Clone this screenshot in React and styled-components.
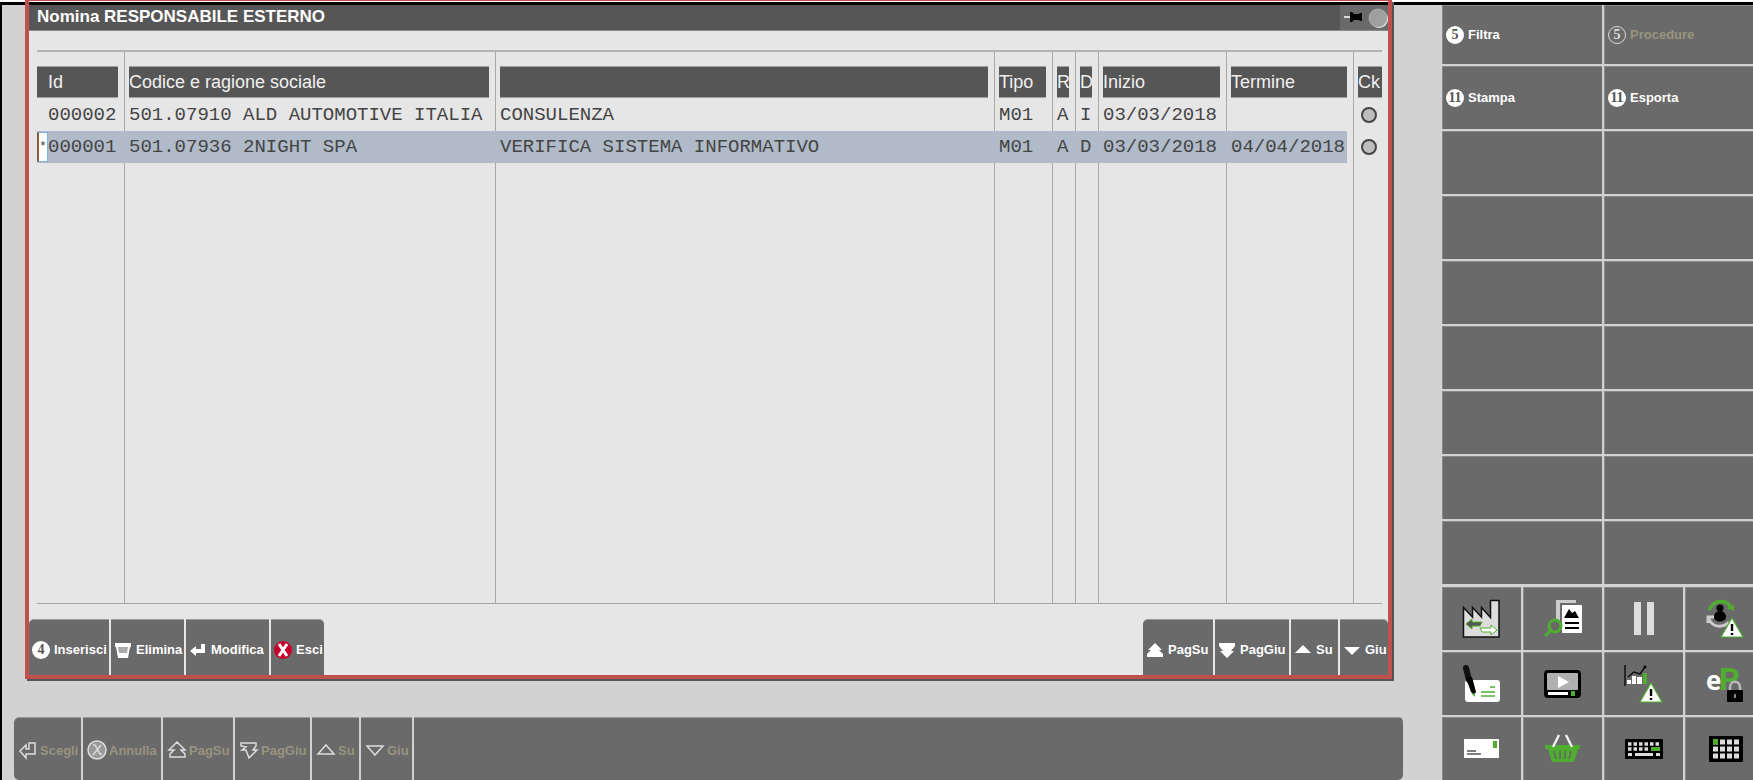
import React from 'react';
import styled, { createGlobalStyle } from 'styled-components';

const GlobalStyle = createGlobalStyle`
  * {
    box-sizing: border-box;
  }
  body {
    margin: 0;
    background: #fff;
    font-family: "Liberation Sans", Arial, sans-serif;
  }
  button {
    font: inherit;
    border: 0;
    padding: 0;
  }
`;

const Screen = styled.div`
  display: flex;
  min-height: 100vh;
  overflow: hidden;
  background: linear-gradient(#fff 2px, #000 2px, #000 5px, #d2d2d2 5px);
`;

const Main = styled.main`
  flex: 1;
  min-width: 0;
  display: flex;
  flex-direction: column;
  justify-content: space-between;
  padding-right: 39px;
  background: linear-gradient(#fff 2px, #000 2px) left / 2px 100% no-repeat;
`;

const Panel = styled.section`
  display: flex;
  flex-direction: column;
  height: calc(100vh - 101px);
  min-height: 420px;
  margin: 0 11px 0 25px;
  border: 4px solid #c0504d;
  border-top-width: 1px;
  box-shadow: 2px 2px 0 #555;
  background: linear-gradient(#fff 1px, #000 1px, #000 4px, #e6e6e6 4px);
`;

const TitleBar = styled.header`
  display: flex;
  justify-content: space-between;
  height: 26px;
  margin-top: 4px;
  background: #565656;
  border-bottom: 1px solid #8a8a8a;
`;

const Title = styled.h1`
  margin: 0;
  padding-left: 8px;
  font-size: 17px;
  line-height: 24px;
  color: #fff;
  white-space: nowrap;
`;

const TitleTools = styled.div`
  display: flex;
  align-items: center;
  width: 48px;
  background: #6a6a6a;
`;

const ToolButton = styled.button`
  display: flex;
  background: none;
`;

const TableArea = styled.div`
  flex: 1;
  display: flex;
  min-height: 0;
  margin: 19px 6px 15px 8px;
  border-top: 2px solid #b4b4b4;
  border-bottom: 1px solid #a6a6a6;
`;

const Table = styled.table`
  width: 100%;
  height: 100%;
  table-layout: fixed;
  border-collapse: separate;
  border-spacing: 0;
`;

const Cell = styled.td`
  height: 32px;
  padding: 0;
  font-family: "Liberation Mono", monospace;
  font-size: 19px;
  line-height: 32px;
  color: #444;
  white-space: pre;
`;

const Line = styled.td`
  padding: 0;
  background: linear-gradient(#a8a8a8, #a8a8a8) 6px 0 / 1px 100% no-repeat;
`;

const Row = styled.tr`
  ${Cell}:not(:last-child), ${Line}:not(:nth-last-child(2)) {
    ${(p) => p.$selected && 'background: #b0bac8;'}
  }
`;

const HeadCell = styled.th`
  height: 47px;
  padding: 14px 0 1px;
`;

const HeadLabel = styled.div`
  height: 32px;
  padding-left: ${(p) => (p.$indent ? 11 : 0)}px;
  background: #565656;
  border: solid #a0a0a0;
  border-width: 1px 0;
  font-size: 18px;
  font-weight: 400;
  line-height: 30px;
  text-align: left;
  color: #f0f0f0;
  white-space: nowrap;
`;

const IdCell = styled.div`
  display: flex;
  align-items: center;
`;

const Marker = styled.input`
  width: 11px;
  height: 30px;
  margin: 0;
  padding: 0;
  border: 1px solid #7ab4e4;
  border-left: 2px solid #8a5a3c;
  background: #fff;
  font: inherit;
  font-size: 13px;
  color: #444;
  outline: 0;
`;

const Spacer = styled.span`
  width: 11px;
`;

const Check = styled.input`
  appearance: none;
  display: block;
  width: 16px;
  height: 16px;
  margin: 0 3px;
  border: 2px solid #444;
  border-radius: 50%;
  background: #bebebe;
`;

const PanelFooter = styled.footer`
  display: flex;
  justify-content: space-between;
`;

const Group = styled.div`
  display: flex;
  gap: 2px;
`;

const ActionButton = styled.button`
  display: flex;
  align-items: center;
  gap: 4px;
  width: ${(p) => p.$width}px;
  height: 56px;
  padding: 4px 0 0 3px;
  background: #6a6a6a;
  border-top: 1px solid #999;
  font-size: 13px;
  font-weight: 700;
  color: #fff;
  white-space: nowrap;
  svg {
    flex: none;
  }
  &:first-child {
    border-top-left-radius: 5px;
  }
  &:last-child {
    border-top-right-radius: 5px;
  }
`;

const CommandBar = styled.div`
  display: flex;
  gap: 2px;
  height: 63px;
  margin-left: 14px;
  border-radius: 5px;
  overflow: hidden;
`;

const Command = styled(ActionButton)`
  height: 63px;
  padding: 2px 0 0 4px;
  gap: 2px;
  color: #98947f;
`;

const CommandFill = styled.div`
  flex: 1;
  background: #6a6a6a;
  border-top: 1px solid #999;
`;

const Sidebar = styled.aside`
  width: 311px;
  padding-top: 5px;
  overflow: hidden;
`;

const MenuGrid = styled.div`
  display: grid;
  grid-template-columns: repeat(2, 160px);
  grid-template-rows: 59px;
  grid-auto-rows: 63px;
  gap: 2px;
`;

const IconGrid = styled.div`
  display: grid;
  grid-template-columns: repeat(4, 79px);
  grid-auto-rows: 63px;
  gap: 2px;
  margin-top: 3px;
`;

const MenuButton = styled.button`
  display: flex;
  align-items: center;
  gap: 4px;
  padding-left: 4px;
  background: #6a6a6a;
  box-shadow: inset 1px 1px 0 #8a8a8a;
  font-size: 13px;
  font-weight: 700;
  color: ${(p) => (p.disabled ? '#98947f' : '#fff')};
`;

const IconButton = styled(MenuButton)`
  justify-content: center;
  padding: 0;
`;

const Badge = styled.span`
  flex: none;
  width: 18px;
  height: 18px;
  border-radius: 50%;
  background: ${(p) => (p.$outline ? 'none' : '#fff')};
  border: ${(p) => (p.$outline ? '1px solid #d8d8d8' : '0')};
  font: bold 14px "Liberation Serif", serif;
  line-height: ${(p) => (p.$outline ? 16 : 18)}px;
  text-align: center;
  color: ${(p) => (p.$outline ? '#ddd' : '#555')};
`;

const GREEN = '#4fae2f';

const glyphs = {
  trash: (
    <>
      <path fill="#fff" d="M1 2h16v4h-1l-2 11H4L2 6H1z" />
      <path fill="#aaa" d="M4 6h10l-1 6H5z" />
    </>
  ),
  enter: <path fill="#fff" d="M1 10l6-5v3h5V3h4v9H7v3z" />,
  exit: (
    <>
      <circle cx="9" cy="9" r="9" fill="#c8002d" />
      <path d="M5 3l8 12M13 3L5 15" stroke="#fff" strokeWidth="3" />
    </>
  ),
  pageUp: <path fill="#fff" d="M9 2l7 7h-3l4 4v3H1v-3l4-4H2z" />,
  pageDown: <path fill="#fff" d="M9 17l7-7h-3l4-5V2H1v3l4 5H2z" />,
  up: <path fill="#fff" d="M9 4l8 8H1z" />,
  down: <path fill="#fff" d="M9 14l8-8H1z" />,
};

const outlines = {
  enter: <path d="M2 11l6-6v4h3V3h6v11H8v4z" />,
  cancel: (
    <>
      <circle cx="10" cy="10" r="9" fill="#999" />
      <path d="M6 5h2l5 9h2M14 5L6 15" />
    </>
  ),
  pageUp: <path d="M10 2l8 8h-4l4 4v3H3v-3l4-4H2z" />,
  pageDown: <path d="M10 18l8-8h-4l3-4V3H2v3l5 1-4 3h4z" />,
  up: <path d="M10 5l8 9H2z" />,
  down: <path d="M10 15l8-9H2z" />,
};

const Glyph = ({ name }) => (
  <svg width="18" height="18" viewBox="0 0 18 18">{glyphs[name]}</svg>
);

const Outline = ({ name }) => (
  <svg width="20" height="20" viewBox="0 0 20 20" fill="none" stroke="#ddd" strokeWidth="1.5">
    {outlines[name]}
  </svg>
);

const Warning = () => (
  <>
    <path d="M27 19l11 19H16z" fill="#fff" stroke={GREEN} strokeWidth="1.2" />
    <path d="M27 25v7M27 34v2" stroke="#000" strokeWidth="2.4" />
  </>
);

const icons = [
  ['Azienda', (
    <>
      <path d="M1.500 38V8.500l9 9.500V8.500l9 9.500V8.500l9 10V1.500h8.500V38z" fill="#dcdcdc" stroke="#111" strokeWidth="1.500" />
      <path d="M4 25l6-5v3h10l-2 4h-8v3z" fill="#555" stroke={GREEN} />
      <path d="M35 31l-6-5v3H18l2 4h9v3z" fill="#fff" stroke={GREEN} />
    </>
  )],
  ['Cerca documenti', (
    <>
      <path d="M13 22V1h20v3H17v18z" fill="#ccc" />
      <rect x="19" y="6" width="20" height="28" rx="1" fill="#fff" />
      <path d="M21 19l5-9 3 4 3-2 4 7zM22 23h14v2H22zM22 28h14v2H22z" fill="#000" />
      <circle cx="12" cy="27" r="6" fill="none" stroke={GREEN} strokeWidth="3" />
      <path d="M8 31l-6 6" stroke={GREEN} strokeWidth="3" />
    </>
  )],
  ['Pausa', <path d="M10 3h7v33h-7zM23 3h7v33h-7z" fill="#ddd" />],
  ['Stato utente', (
    <>
      <path d="M4 11C9 0 22 0 26 9" fill="none" stroke={GREEN} strokeWidth="3.500" />
      <path d="M21 9l8-3v6z" fill={GREEN} />
      <path d="M4 20c4 9 14 9 20 3M3 24v-6h6" fill="none" stroke="#ccc" strokeWidth="3" />
      <circle cx="15" cy="9" r="3.500" />
      <path d="M9 18c0-8 12-8 12 0 0 6-12 6-12 0z" />
      <Warning />
    </>
  )],
  ['Firma', (
    <>
      <rect x="3" y="16" width="35" height="22" rx="3" fill="#fff" />
      <path d="M28 23h5M19 28h14M19 32h14" stroke={GREEN} strokeWidth="1.5" />
      <path d="M4 4l3 12" stroke="#111" strokeWidth="6" strokeLinecap="round" />
      <path d="M4 14l6-1 4 15-2 3-3-3z" />
      <path d="M10 30l3-1v4z" fill={GREEN} />
    </>
  )],
  ['Video', (
    <>
      <rect x="1" y="6" width="37" height="28" rx="4" />
      <rect x="4" y="9" width="31" height="17" rx="1" fill="#b0b0b0" />
      <path d="M15 12l11 6-11 6zM5 28h20v3H5z" fill="#fff" />
      <path d="M28 27h4v5h-4z" fill={GREEN} />
    </>
  )],
  ['Analisi', (
    <>
      <path d="M1 1v21" stroke="#111" strokeWidth="1.5" />
      <path d="M3 16h4v4H3zM8 12h4v8H8zM13 13h5v7h-5z" fill="#fff" />
      <path d="M19 9h4v11h-4z" fill={GREEN} />
      <path d="M4 13l6-5 6 2 5-7" fill="none" stroke="#111" strokeWidth="1.500" />
      <circle cx="21" cy="3" r="1.500" />
      <Warning />
    </>
  )],
  ['Protezione', (
    <>
      <text x="1" y="26" fontFamily="Open Sans" fontWeight="700" fontSize="26" fill="#fff">e</text>
      <text x="14" y="26" fontFamily="Roboto" fontWeight="700" fontSize="32" fill={GREEN}>P</text>
      <path d="M25 27v-4c0-7 10-7 10 0v4" fill="none" stroke="#bbb" strokeWidth="2.500" />
      <rect x="22" y="26" width="16" height="12" rx="1" />
      <path d="M30 30v4" stroke="#888" strokeWidth="2" />
    </>
  )],
  ['Posta', (
    <>
      <rect x="2" y="10" width="35" height="19" fill="#fff" />
      <path d="M31 12h4v7h-4z" fill={GREEN} />
      <path d="M5 22h9M5 25h14" stroke="#555" strokeWidth="1.500" />
    </>
  )],
  ['Carrello', (
    <>
      <path d="M2 16h35v4h-2l-4 13H9L5 20H2z" fill={GREEN} />
      <path d="M11 22l2 8M17 22v8M22 22v8M28 22l-2 8" stroke="#666" strokeWidth="1.500" />
      <path d="M10 18l6-12M29 18L23 6" stroke="#eee" strokeWidth="2.500" />
    </>
  )],
  ['Tastiera', (
    <>
      <rect x="1" y="10" width="38" height="20" rx="1" />
      <path d="M4 15h32" stroke="#ddd" strokeWidth="3.500" strokeDasharray="3.500 2" />
      <path d="M4 20h22" stroke="#ddd" strokeWidth="3.500" strokeDasharray="3.500 2" />
      <path d="M27 18h9v4h-9z" fill={GREEN} />
      <path d="M4 24h4v3H4zM11 24h18v3H11zM32 24h4v3h-4z" fill="#ddd" />
    </>
  )],
  ['Tastierino', (
    <>
      <rect x="4" y="7" width="34" height="26" rx="1" />
      <path d="M8 13h26M8 20h26M8 27h26" stroke="#ddd" strokeWidth="5" strokeDasharray="5 2" />
      <path d="M8 10h5v5.500H8z" fill={GREEN} />
    </>
  )],
];

const columns = [
  { label: 'Id', width: 81, indent: true },
  { label: 'Codice e ragione sociale', width: 360 },
  { label: '' },
  { label: 'Tipo', width: 47 },
  { label: 'R', width: 12 },
  { label: 'D', width: 12 },
  { label: 'Inizio', width: 117 },
  { label: 'Termine', width: 116 },
  { label: 'Ck', width: 24 },
];

const rows = [
  ['000002', '501.07910 ALD AUTOMOTIVE ITALIA', 'CONSULENZA', 'M01', 'A', 'I', '03/03/2018', ''],
  ['000001', '501.07936 2NIGHT SPA', 'VERIFICA SISTEMA INFORMATIVO', 'M01', 'A', 'D', '03/03/2018', '04/04/2018'],
];

const menu = [
  { key: '5', label: 'Filtra' },
  { key: '5', label: 'Procedure', disabled: true },
  { key: '11', label: 'Stampa' },
  { key: '11', label: 'Esporta' },
];

const commands = [
  ['enter', 'Scegli', 67],
  ['cancel', 'Annulla', 78],
  ['pageUp', 'PagSu', 70],
  ['pageDown', 'PagGiu', 75],
  ['up', 'Su', 47],
  ['down', 'Giu', 51],
];

const Grid = () => (
  <Table>
    <colgroup>
      {columns.map((c, i) => (
        <React.Fragment key={i}>
          {i > 0 && <col style={{ width: 11 }} />}
          <col style={{ width: c.width }} />
        </React.Fragment>
      ))}
    </colgroup>
    <thead>
      <tr>
        {columns.map((c, i) => (
          <React.Fragment key={i}>
            {i > 0 && <Line />}
            <HeadCell scope="col">
              <HeadLabel $indent={c.indent}>{c.label}</HeadLabel>
            </HeadCell>
          </React.Fragment>
        ))}
      </tr>
    </thead>
    <tbody>
      {rows.map((row, r) => (
        <Row key={row[0]} $selected={r === 1}>
          {row.map((value, i) => (
            <React.Fragment key={i}>
              {i > 0 && <Line />}
              <Cell>
                {i === 0 ? (
                  <IdCell>
                    {r === 1 ? <Marker aria-label="Selezione" defaultValue="*" /> : <Spacer />}
                    {value}
                  </IdCell>
                ) : value}
              </Cell>
            </React.Fragment>
          ))}
          <Line />
          <Cell><Check type="radio" name="ck" aria-label={`Ck ${row[0]}`} /></Cell>
        </Row>
      ))}
      <tr>
        {columns.map((c, i) => (
          <React.Fragment key={i}>
            {i > 0 && <Line />}
            <td />
          </React.Fragment>
        ))}
      </tr>
    </tbody>
  </Table>
);

const App = () => (
  <>
    <GlobalStyle />
    <Screen>
      <Main>
        <Panel>
          <TitleBar>
            <Title>Nomina RESPONSABILE ESTERNO</Title>
            <TitleTools>
              <ToolButton aria-label="Fissa">
                <svg width="28" height="20" viewBox="0 0 28 20">
                  <path d="M4 8h7v2H4z" fill="#ddd" />
                  <path d="M10 4h2l2 2h5l1-1h2v8h-2l-1-1h-5l-2 2h-2z" />
                </svg>
              </ToolButton>
              <ToolButton aria-label="Chiudi">
                <svg width="20" height="22" viewBox="0 0 20 22">
                  <circle cx="11" cy="12" r="9" fill="#fff" />
                  <circle cx="10" cy="11" r="9" fill="#a0a0a0" stroke="#aaa" />
                </svg>
              </ToolButton>
            </TitleTools>
          </TitleBar>
          <TableArea>
            <Grid />
          </TableArea>
          <PanelFooter>
            <Group>
              <ActionButton $width={80}><Badge>4</Badge>Inserisci</ActionButton>
              <ActionButton $width={73}><Glyph name="trash" />Elimina</ActionButton>
              <ActionButton $width={83}><Glyph name="enter" />Modifica</ActionButton>
              <ActionButton $width={53}><Glyph name="exit" />Esci</ActionButton>
            </Group>
            <Group>
              <ActionButton $width={70}><Glyph name="pageUp" />PagSu</ActionButton>
              <ActionButton $width={74}><Glyph name="pageDown" />PagGiu</ActionButton>
              <ActionButton $width={47}><Glyph name="up" />Su</ActionButton>
              <ActionButton $width={48}><Glyph name="down" />Giu</ActionButton>
            </Group>
          </PanelFooter>
        </Panel>
        <CommandBar>
          {commands.map(([icon, label, width]) => (
            <Command key={label} $width={width} disabled>
              <Outline name={icon} />{label}
            </Command>
          ))}
          <CommandFill />
        </CommandBar>
      </Main>
      <Sidebar>
        <MenuGrid>
          {Array.from({ length: 18 }, (_, i) => {
            const item = menu[i];
            return item ? (
              <MenuButton key={i} disabled={item.disabled}>
                <Badge $outline={item.disabled}>{item.key}</Badge>
                {item.label}
              </MenuButton>
            ) : <MenuButton key={i} aria-label="Vuoto" />;
          })}
        </MenuGrid>
        <IconGrid>
          {icons.map(([label, drawing]) => (
            <IconButton key={label} aria-label={label}>
              <svg width="40" height="40" viewBox="0 0 40 40" overflow="visible">{drawing}</svg>
            </IconButton>
          ))}
        </IconGrid>
      </Sidebar>
    </Screen>
  </>
);

export default App;
